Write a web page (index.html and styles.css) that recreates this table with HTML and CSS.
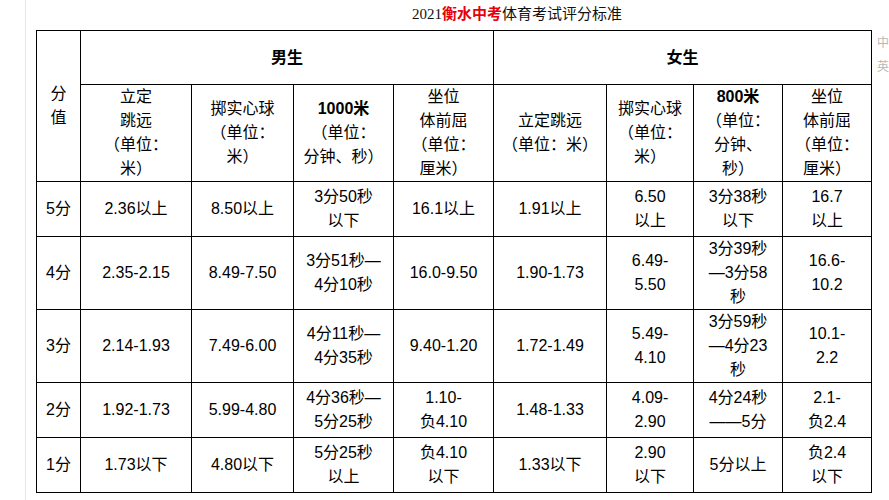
FILE: index.html
```html
<!DOCTYPE html>
<html lang="zh-CN">
<head>
<meta charset="utf-8">
<title>2021衡水中考体育考试评分标准</title>
<link rel="stylesheet" href="styles.css">
</head>
<body>
<div class="page">
  <h1 class="title">2021<span class="hl">衡水中考</span>体育考试评分标准</h1>
  <table class="score">
    <colgroup>
      <col class="c0"><col class="c1"><col class="c2"><col class="c3"><col class="c4">
      <col class="c5"><col class="c6"><col class="c7"><col class="c8">
    </colgroup>
    <thead>
      <tr class="r-sex">
        <th rowspan="2" class="lbl">分<br>值</th>
        <th colspan="4" class="sex">男生</th>
        <th colspan="4" class="sex">女生</th>
      </tr>
      <tr class="r-item">
        <th>立定<br>跳远<br>（单位：<br>米）</th>
        <th>掷实心球<br>（单位：<br>米）</th>
        <th><b>1000米</b><br>（单位：<br>分钟、秒）</th>
        <th>坐位<br>体前屈<br>（单位：<br>厘米）</th>
        <th>立定跳远<br>（单位：米）</th>
        <th>掷实心球<br>（单位：<br>米）</th>
        <th><b>800米</b><br>（单位：<br>分钟、<br>秒）</th>
        <th>坐位<br>体前屈<br>（单位：<br>厘米）</th>
      </tr>
    </thead>
    <tbody>
      <tr class="r-s">
        <td>5分</td><td>2.36以上</td><td>8.50以上</td><td>3分50秒<br>以下</td><td>16.1以上</td>
        <td>1.91以上</td><td>6.50<br>以上</td><td>3分38秒<br>以下</td><td>16.7<br>以上</td>
      </tr>
      <tr class="r-l">
        <td>4分</td><td>2.35-2.15</td><td>8.49-7.50</td><td>3分51秒—<br>4分10秒</td><td>16.0-9.50</td>
        <td>1.90-1.73</td><td>6.49-<br>5.50</td><td>3分39秒<br>—3分58<br>秒</td><td>16.6-<br>10.2</td>
      </tr>
      <tr class="r-l">
        <td>3分</td><td>2.14-1.93</td><td>7.49-6.00</td><td>4分11秒—<br>4分35秒</td><td>9.40-1.20</td>
        <td>1.72-1.49</td><td>5.49-<br>4.10</td><td>3分59秒<br>—4分23<br>秒</td><td>10.1-<br>2.2</td>
      </tr>
      <tr class="r-s">
        <td>2分</td><td>1.92-1.73</td><td>5.99-4.80</td><td>4分36秒—<br>5分25秒</td><td>1.10-<br>负4.10</td>
        <td>1.48-1.33</td><td>4.09-<br>2.90</td><td>4分24秒<br>——5分</td><td>2.1-<br>负2.4</td>
      </tr>
      <tr class="r-s">
        <td>1分</td><td>1.73以下</td><td>4.80以下</td><td>5分25秒<br>以上</td><td>负4.10<br>以下</td>
        <td>1.33以下</td><td>2.90<br>以下</td><td>5分以上</td><td>负2.4<br>以下</td>
      </tr>
    </tbody>
  </table>
  <div class="side-tools"><span>中</span><span>英</span></div>
</div>
</body>
</html>
```

FILE: styles.css
```css
html, body {
  margin: 0;
  padding: 0;
  background: #ffffff;
}

.page {
  position: relative;
  margin-left: 25px;
  border-left: 1px solid #e6e6e6;
  padding-left: 10px;
  height: 500px;
  box-sizing: border-box;
  overflow: hidden;
  font-family: "Liberation Sans", "Noto Sans CJK SC", sans-serif;
  color: #000;
}

.title {
  margin: 0 0 0 376px;
  height: 30px;
  line-height: 26px;
  font-size: 15px;
  font-weight: normal;
  font-family: "Liberation Serif", "Noto Sans CJK SC", serif;
  white-space: nowrap;
  color: #111;
}

.title .hl {
  color: #e8000b;
  font-weight: bold;
  font-family: "Noto Sans CJK SC", sans-serif;
}

.score {
  border-collapse: collapse;
  table-layout: fixed;
  width: 836px;
  font-size: 16px;
  line-height: 24px;
}

.score th,
.score td {
  border: 1px solid #000;
  padding: 0;
  text-align: center;
  vertical-align: middle;
  font-weight: normal;
}

.score .sex {
  font-weight: bold;
  font-size: 16px;
}

.score b {
  font-weight: bold;
}

.c0 { width: 44px; }
.c1 { width: 111px; }
.c2 { width: 102px; }
.c3 { width: 100px; }
.c4 { width: 100px; }
.c5 { width: 113px; }
.c6 { width: 87px; }
.c7 { width: 89px; }
.c8 { width: 89px; }

.r-sex { height: 54px; }
.r-item { height: 97px; }
.r-s { height: 55px; }
.r-l { height: 73px; }

.side-tools {
  position: absolute;
  left: 851px;
  top: 34px;
  display: flex;
  flex-direction: column;
  gap: 9px;
  font-size: 12px;
  line-height: 15px;
  color: #b8b8b8;
  font-family: "Noto Sans CJK SC", sans-serif;
}
```
